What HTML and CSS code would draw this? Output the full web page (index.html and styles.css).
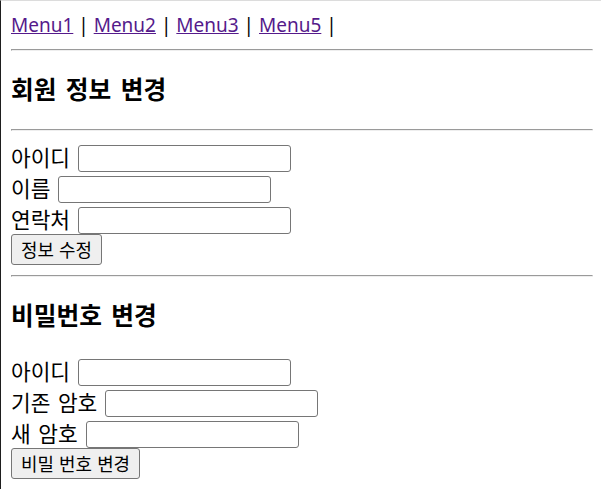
FILE: index.html
```html
<!DOCTYPE html>
<html lang="ko">
<head>
    <meta charset="UTF-8">
    <meta name="viewport" content="width=device-width, initial-scale=1.0">
    <title>회원 정보</title>
    <link rel="stylesheet" href="styles.css">
</head>
<body>
    <div class="menu">
        <a href="#">Menu1</a> | <a href="#">Menu2</a> | <a href="#">Menu3</a> | <a href="#">Menu5</a> |
    </div>
    <hr>
    <h3>회원 정보 변경</h3>
    <hr>
    <form class="user-form">
        <div class="row"><span>아이디</span><input type="text"></div>
        <div class="row"><span>이름</span><input type="text"></div>
        <div class="row"><span>연락처</span><input type="text"></div>
        <div class="row"><button type="button">정보 수정</button></div>
    </form>
    <hr>
    <h3>비밀번호 변경</h3>
    <form class="user-form">
        <div class="row"><span>아이디</span><input type="text"></div>
        <div class="row"><span>기존 암호</span><input type="password"></div>
        <div class="row"><span>새 암호</span><input type="password"></div>
        <div class="row"><button type="button">비밀 번호 변경</button></div>
    </form>
</body>
</html>
```

FILE: styles.css
```css
html {
    background-color: #fff;
    border-top: 1px solid #dcdcdc;
    border-left: 1px solid #1e1e1e;
}
body {
    margin: 10px 8px 10px 10px;
    font-family: "Noto Sans", "Noto Sans CJK KR", sans-serif;
    font-size: 20px;
    color: #000;
}
.menu {
    font-size: 19px;
    line-height: 28px;
}
.menu a {
    color: #551a8b;
}
hr {
    margin: 10px 0;
}
h3 {
    font-size: 24.7px;
    line-height: 31px;
    margin: 23.4px 0;
    word-spacing: 3px;
}
.user-form {
    margin: 0;
}
.row {
    display: flex;
    align-items: center;
    gap: 8px;
    height: 31px;
    font-size: 21.4px;
    word-spacing: 2px;
}
.row input {
    box-sizing: border-box;
    width: 213px;
    height: 27px;
    margin: 4px 0 0 0;
    border: 1px solid #767676;
    border-radius: 3px;
    padding: 1px 3px;
    font-size: 16.7px;
}
.row button {
    box-sizing: border-box;
    height: 31px;
    padding: 0 9px;
    border: 1px solid #767676;
    border-radius: 3px;
    background-color: #efefef;
    font-family: "Noto Sans", "Noto Sans CJK KR", sans-serif;
    font-size: 17.9px;
    color: #000;
    word-spacing: 0.5px;
}
```
